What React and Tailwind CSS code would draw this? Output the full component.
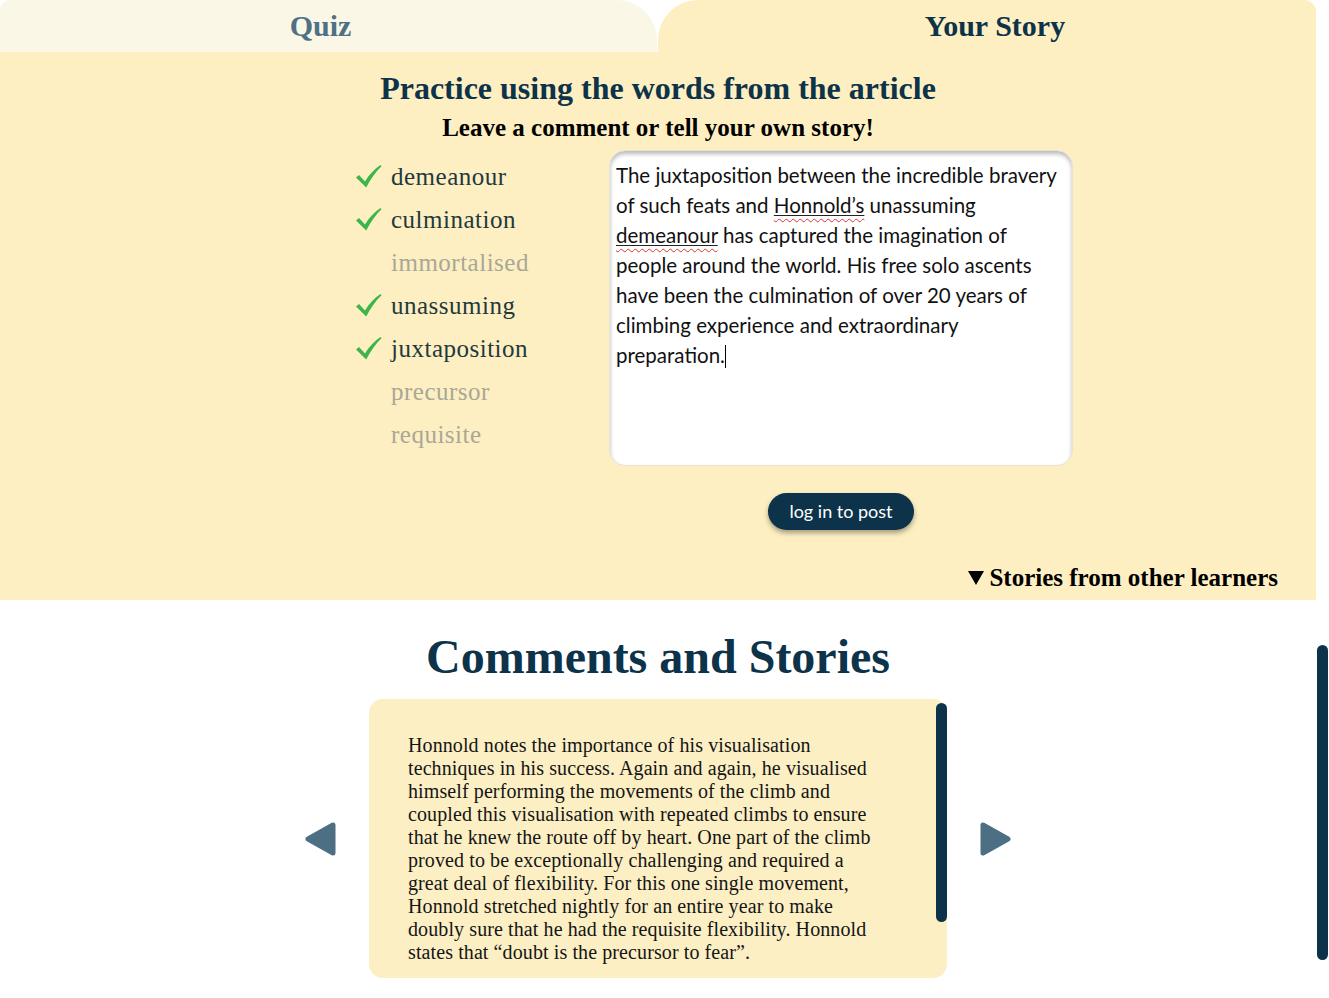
import React from "react";

const serif = { fontFamily: '"Liberation Serif", "Times New Roman", serif' };
const sans = { fontFamily: 'Lato, "Open Sans", sans-serif' };

function Check() {
  return (
    <svg width="27" height="25" viewBox="0 0 27 25" className="shrink-0">
      <path
        d="M1 13.5 L4 11 L10 17.5 C14 10.5 19.5 5 25.5 1 L26.5 2.2 C20.5 8 15.5 15 11.2 23.5 Z"
        fill="#3cb54a"
      />
    </svg>
  );
}

const words = [
  { w: "demeanour", done: true },
  { w: "culmination", done: true },
  { w: "immortalised", done: false },
  { w: "unassuming", done: true },
  { w: "juxtaposition", done: true },
  { w: "precursor", done: false },
  { w: "requisite", done: false },
];

function Spell({ children }) {
  return (
    <span className="underline decoration-wavy decoration-[#d33] underline-offset-[5px] decoration-1">
      <span className="underline decoration-[#222] underline-offset-[2px] decoration-1">{children}</span>
    </span>
  );
}

export default function App() {
  return (
    <div className="w-[1329px] h-[998px] bg-white flex overflow-hidden">
      <div className="w-[1316px] flex flex-col">
        {/* Yellow panel */}
        <div className="h-[600px] flex flex-col">
          <div className="flex h-[52px]">
            <div className="w-[657px] bg-[#fbf7e7] rounded-tl-[10px] rounded-tr-[40px] flex items-center justify-center">
              <span className="text-[30px] font-bold text-[#4f7186] leading-none -ml-[16px]" style={serif}>Quiz</span>
            </div>
            <div className="flex-1 ml-[1px] bg-[#fdefc2] rounded-tl-[40px] rounded-tr-[12px] flex items-center justify-center">
              <span className="text-[30px] font-bold text-[#0c3349] leading-none ml-[16px]" style={serif}>Your Story</span>
            </div>
          </div>
          <div className="flex-1 bg-[#fdefc2] flex flex-col">
            <h1 className="text-center text-[32px] font-bold text-[#0c3349] leading-none mt-[20px]" style={serif}>
              Practice using the words from the article
            </h1>
            <h2 className="text-center text-[25px] font-bold text-black leading-none mt-[11px]" style={serif}>
              Leave a comment or tell your own story!
            </h2>
            <div className="flex mt-[10px] pl-[355px]">
              <ul className="w-[254px] flex flex-col mt-[5px]">
                {words.map((it) => (
                  <li key={it.w} className="h-[43px] flex items-center">
                    <span className="w-[36px] flex">{it.done ? <Check /> : null}</span>
                    <span
                      className={`text-[25px] tracking-[0.5px] leading-none ${it.done ? "text-[#22393d]" : "text-[#a9a796]"}`}
                      style={serif}
                    >
                      {it.w}
                    </span>
                  </li>
                ))}
              </ul>
              <div
                className="w-[464px] h-[316px] bg-white rounded-[16px] border border-[#e6e2d6] shadow-[inset_0_3px_4px_rgba(0,0,0,0.28)] px-[6px] pt-[9px] text-[20.5px] leading-[30px] text-[#111]"
                style={sans}
              >
                The juxtaposition between the incredible bravery of such feats and <Spell>Honnold’s</Spell> unassuming{" "}
                <Spell>demeanour</Spell> has captured the imagination of people around the world. His free solo ascents
                have been the culmination of over 20 years of climbing experience and extraordinary preparation.
                <span className="inline-block w-[1px] h-[23px] bg-black align-[-5px]"></span>
              </div>
            </div>
            <div className="flex justify-center pl-[366px] mt-[27px]">
              <button
                className="h-[37px] px-[21px] rounded-full bg-[#0c3349] text-white text-[18px] shadow-[0_3px_5px_rgba(0,0,0,0.35)]"
                style={sans}
              >
                log in to post
              </button>
            </div>
            <div className="flex justify-end pr-[38px] mt-[35px]">
              <span className="flex items-center text-[25px] font-bold text-black leading-none" style={serif}>
                <svg width="16" height="14" viewBox="0 0 16 14" className="mr-[5px]">
                  <path d="M0 0 L16 0 L8 14 Z" fill="#000" />
                </svg>
                Stories from other learners
              </span>
            </div>
          </div>
        </div>
        {/* Comments */}
        <div className="flex flex-col items-center">
          <h2 className="text-[48px] font-bold text-[#0c3349] leading-none mt-[33px]" style={serif}>
            Comments and Stories
          </h2>
          <div className="flex items-center gap-[32px] mt-[18px]">
            <svg width="33" height="34" viewBox="0 0 33 34">
              <path d="M29 3 L29 31 L4 17 Z" fill="#4d6f84" stroke="#4d6f84" strokeWidth="5" strokeLinejoin="round" />
            </svg>
            <div className="relative w-[578px] h-[279px] bg-[#fcefc4] rounded-[14px] pl-[39px] pr-[60px] pt-[35px]">
              <p className="text-[20px] tracking-[0.1px] leading-[23px] text-[#151515]" style={serif}>
                Honnold notes the importance of his visualisation techniques in his success. Again and again, he visualised
                himself performing the movements of the climb and coupled this visualisation with repeated climbs to ensure
                that he knew the route off by heart. One part of the climb proved to be exceptionally challenging and
                required a great deal of flexibility. For this one single movement, Honnold stretched nightly for an
                entire year to make doubly sure that he had the requisite flexibility. Honnold states that “doubt is the
                precursor to fear”.
              </p>
              <div className="absolute right-0 top-[4px] w-[11px] h-[219px] rounded-full bg-[#0c3349]"></div>
            </div>
            <svg width="33" height="34" viewBox="0 0 33 34">
              <path d="M4 3 L4 31 L29 17 Z" fill="#4d6f84" stroke="#4d6f84" strokeWidth="5" strokeLinejoin="round" />
            </svg>
          </div>
        </div>
      </div>
      <div className="w-[13px] flex flex-col">
        <div className="mt-[645px] ml-[1px] w-[11px] h-[315px] rounded-full bg-[#0c3349]"></div>
      </div>
    </div>
  );
}
